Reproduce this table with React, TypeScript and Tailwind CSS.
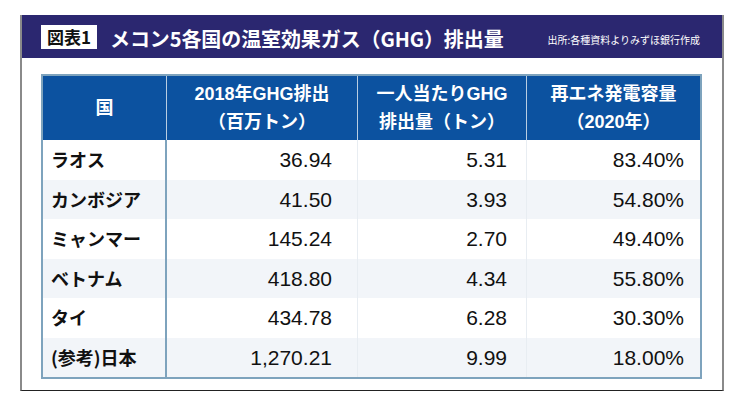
import React from "react";

type Row = {
  name: string;
  ghg: string;
  perCapita: string;
  renewable: string;
};

const rows: Row[] = [
  { name: "ラオス", ghg: "36.94", perCapita: "5.31", renewable: "83.40%" },
  { name: "カンボジア", ghg: "41.50", perCapita: "3.93", renewable: "54.80%" },
  { name: "ミャンマー", ghg: "145.24", perCapita: "2.70", renewable: "49.40%" },
  { name: "ベトナム", ghg: "418.80", perCapita: "4.34", renewable: "55.80%" },
  { name: "タイ", ghg: "434.78", perCapita: "6.28", renewable: "30.30%" },
  { name: "(参考)日本", ghg: "1,270.21", perCapita: "9.99", renewable: "18.00%" },
];

const jp = "font-['Noto_Sans_CJK_JP','Noto_Sans',sans-serif]";
const num = "font-['Liberation_Sans','Noto_Sans_CJK_JP',sans-serif]";

const HeaderCell: React.FC<{ lines: string[]; last?: boolean }> = ({ lines, last }) => (
  <div
    className={`flex flex-col items-center justify-center text-[18px] font-bold leading-[28px] text-white ${num} ${
      last ? "" : "border-r-[1.5px] border-[#b9cde2]"
    }`}
  >
    {lines.map((l) => (
      <span key={l}>{l}</span>
    ))}
  </div>
);

export default function App() {
  return (
    <div className={`h-[401px] w-[740px] overflow-hidden bg-white pt-[15px] pl-[20px] ${jp}`}>
      <div className="flex h-[376px] w-[704px] flex-col border-x-2 border-b-[1.5px] border-x-[#8a8a8a] border-b-[#222]">
        {/* title bar */}
        <div className="flex h-[43px] items-center bg-[#2b2770] pl-[19px] pr-[22px]">
          <div className="flex h-[24px] items-center bg-white px-[6px] text-[17px] font-bold leading-none text-[#111]">
            図表1
          </div>
          <div className="ml-[13px] mt-[4px] text-[20px] font-bold leading-none tracking-[-0.1px] text-white">
            メコン5各国の温室効果ガス（GHG）排出量
          </div>
          <div className="ml-auto mt-[6px] text-[10px] leading-none text-white">
            出所:各種資料よりみずほ銀行作成
          </div>
        </div>

        {/* table */}
        <div className="pl-[19px] pt-[16px]">
          <div className="w-[661px] border-2 border-[#7ea3bd]">
            <div className="grid h-[64px] grid-cols-[124px_191px_169px_173px] bg-[#0c52a0]">
              <HeaderCell lines={["国"]} />
              <HeaderCell lines={["2018年GHG排出", "（百万トン）"]} />
              <HeaderCell lines={["一人当たりGHG", "排出量（トン）"]} />
              <HeaderCell lines={["再エネ発電容量", "（2020年）"]} last />
            </div>
            {rows.map((r, i) => (
              <div
                key={r.name}
                className={`grid h-[39.5px] grid-cols-[124px_191px_169px_173px] ${
                  i % 2 === 1 ? "bg-[#f2f5f9]" : "bg-white"
                }`}
              >
                <div className="flex items-center border-r-2 border-[#7ea3bd] pl-[8px] text-[18px] font-bold text-[#111]">
                  {r.name}
                </div>
                <div className={`flex items-center justify-end border-r border-[#e8edf2] pr-[25px] text-[21px] text-[#111] ${num}`}>
                  {r.ghg}
                </div>
                <div className={`flex items-center justify-end border-r border-[#e8edf2] pr-[19px] text-[21px] text-[#111] ${num}`}>
                  {r.perCapita}
                </div>
                <div className={`flex items-center justify-end pr-[16px] text-[21px] text-[#111] ${num}`}>
                  {r.renewable}
                </div>
              </div>
            ))}
          </div>
        </div>
      </div>
    </div>
  );
}
